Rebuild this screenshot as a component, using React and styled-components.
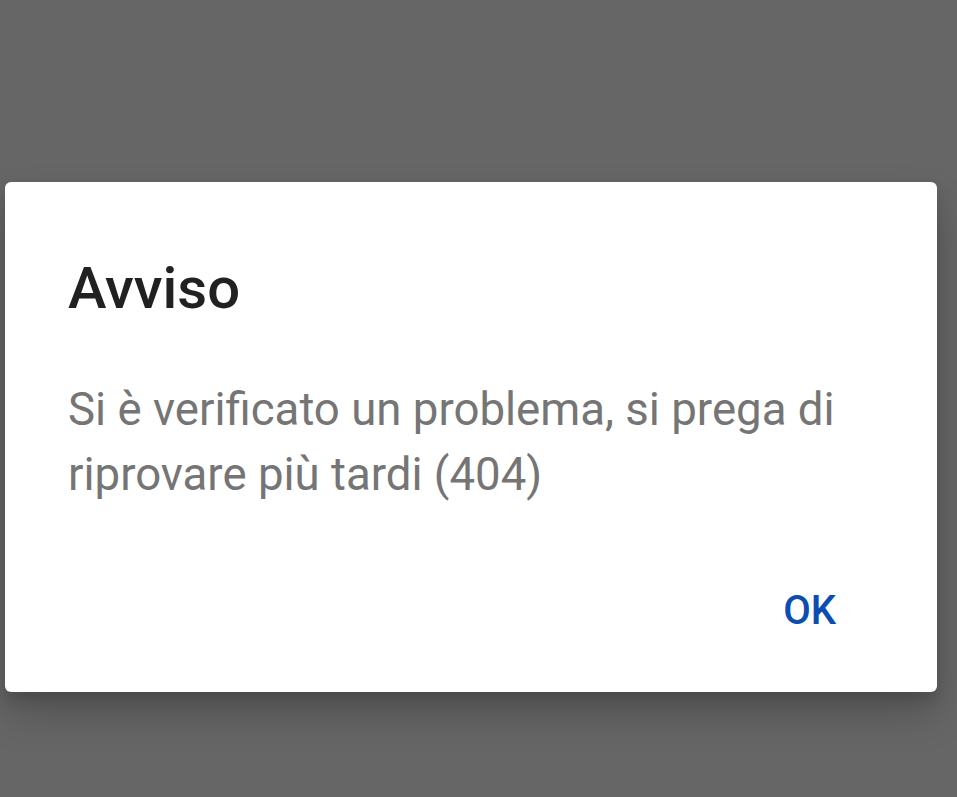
import React from 'react';
import styled, { createGlobalStyle } from 'styled-components';

const GlobalStyle = createGlobalStyle`
  html, body {
    margin: 0;
    padding: 0;
    background: #666666;
  }
  body {
    font-family: Roboto, "Noto Sans", sans-serif;
  }
`;

const Screen = styled.div`
  width: 957px;
  height: 797px;
  overflow: hidden;
  padding-top: 182px;
  box-sizing: border-box;
`;

const Dialog = styled.div`
  width: 932px;
  height: 510px;
  margin-left: 5px;
  background: #ffffff;
  border-radius: 6px;
  box-shadow: 0 22px 40px rgba(0, 0, 0, 0.2), 0 8px 14px rgba(0, 0, 0, 0.12);
  display: flex;
  flex-direction: column;
  box-sizing: border-box;
  padding: 64px 63px 0 63px;
`;

const Title = styled.h2`
  margin: 0;
  font-size: 58px;
  font-weight: 500;
  line-height: 84px;
  color: #212121;
`;

const Message = styled.p`
  margin: 47px 0 0 0;
  font-size: 45.6px;
  font-weight: 400;
  line-height: 65px;
  color: #757575;
`;

const Actions = styled.div`
  margin-top: auto;
  display: flex;
  justify-content: flex-end;
  padding: 0 16px 34px 0;
`;

const TextButton = styled.button`
  border: none;
  background: none;
  padding: 0 22px;
  height: 96px;
  font-family: Roboto, "Noto Sans", sans-serif;
  font-size: 40px;
  font-weight: 500;
  color: #0a4db3;
  cursor: pointer;
`;

const App = () => {
  return (
    <>
      <GlobalStyle />
      <Screen>
        <Dialog>
          <Title>Avviso</Title>
          <Message>
            Si è verificato un problema, si prega di riprovare più tardi (404)
          </Message>
          <Actions>
            <TextButton>OK</TextButton>
          </Actions>
        </Dialog>
      </Screen>
    </>
  );
};

export default App;
